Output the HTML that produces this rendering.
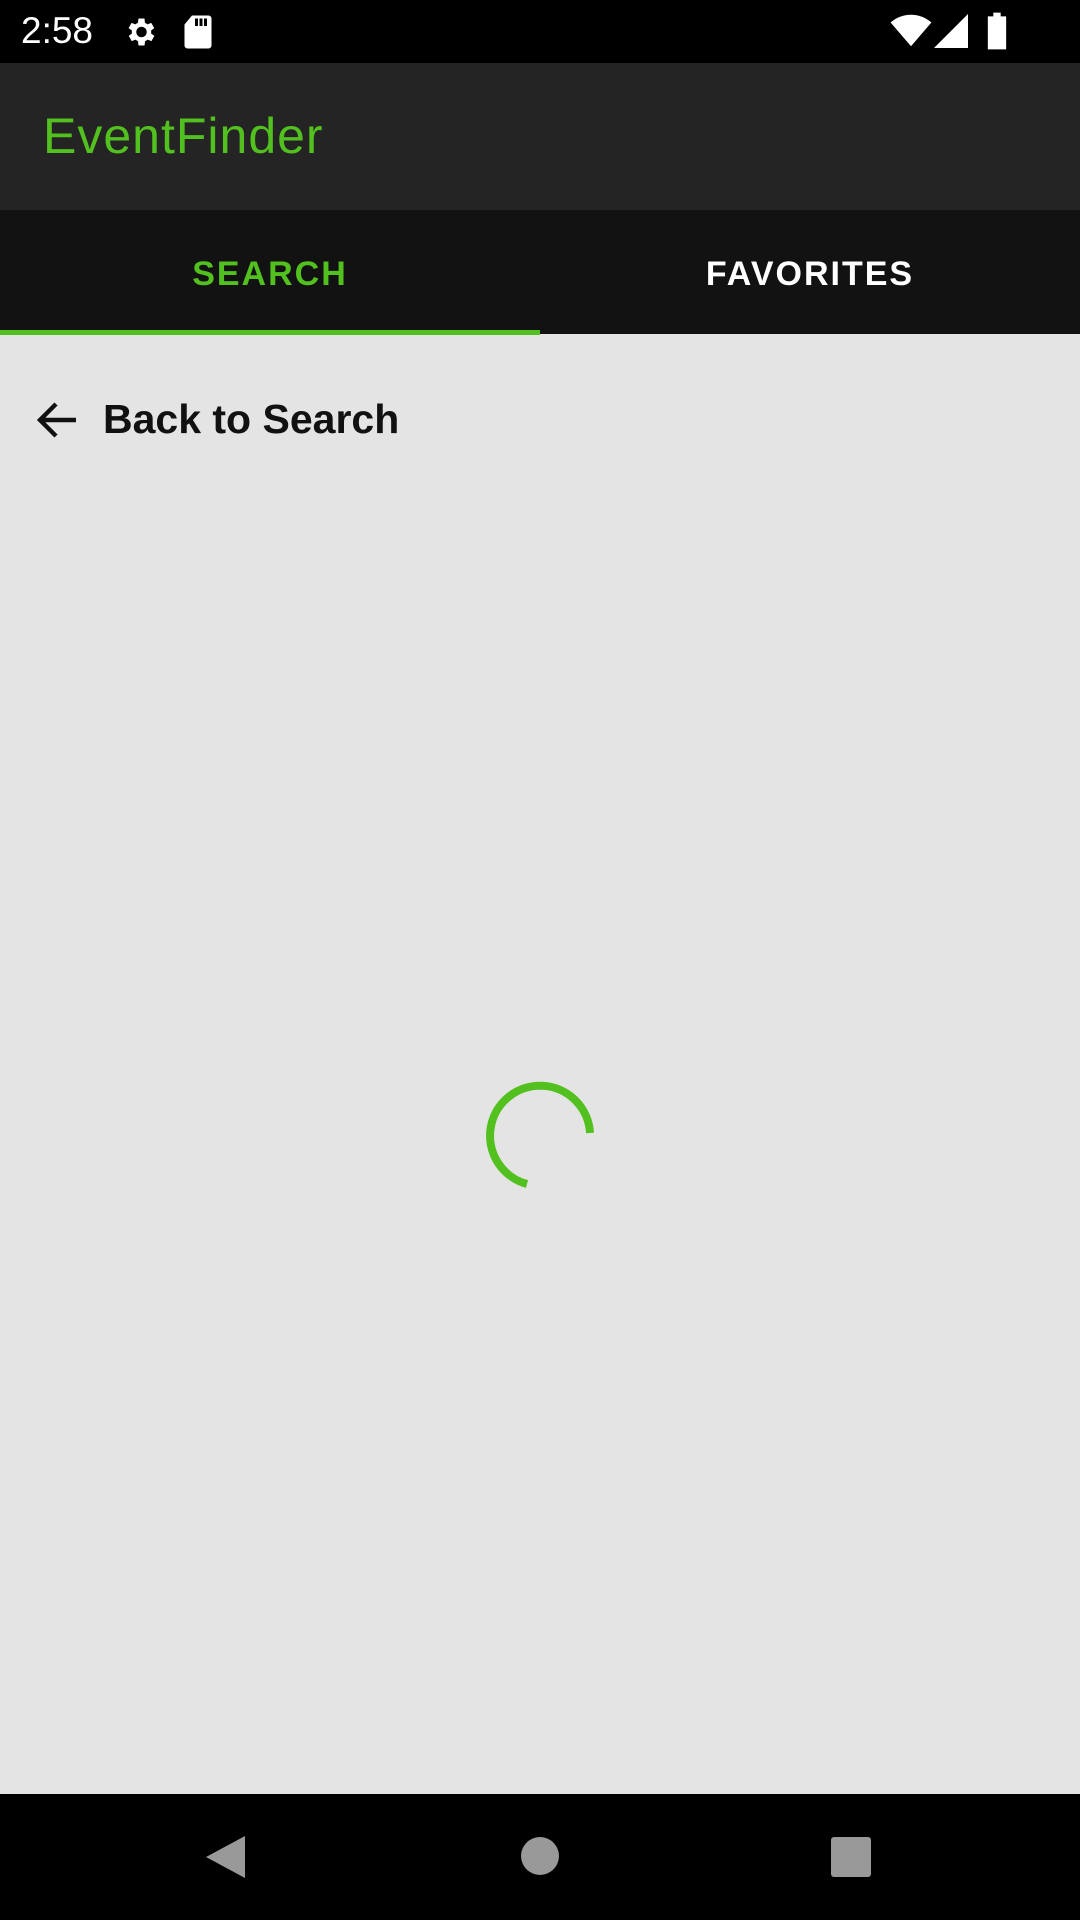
<!DOCTYPE html>
<html><head><meta charset="utf-8"><style>
*{margin:0;padding:0;box-sizing:border-box}
html,body{width:1080px;height:1920px;overflow:hidden}
body{background:#e4e4e4;font-family:"Liberation Sans",Roboto,sans-serif;position:relative}
.sb{position:absolute;top:0;left:0;width:1080px;height:63px;background:#000;color:#fff}
.ab{position:absolute;top:63px;left:0;width:1080px;height:147px;background:#242424}
.ab h1{position:absolute;left:43px;top:44px;font-size:50px;font-weight:normal;color:#52c01e;letter-spacing:1px}
.tabs{position:absolute;top:210px;left:0;width:1080px;height:124px;background:#121212}
.tab{position:absolute;top:0;width:540px;height:124px;line-height:128px;text-align:center;font-size:34px;font-weight:bold;letter-spacing:2px;color:#fff}
.ind{position:absolute;left:0;top:330px;width:540px;height:5px;background:#52c01e}
.back{position:absolute;left:103px;top:396px;font-size:41px;font-weight:bold;color:#111}
.nav{position:absolute;top:1794px;left:0;width:1080px;height:126px;background:#000}
</style></head><body>
<div class="sb">
<div style="position:absolute;left:21px;top:10px;font-size:37px">2:58</div>
<svg style="position:absolute;left:122px;top:14px" width="36" height="36" viewBox="0 0 24 24"><path fill="#fff" d="M19.4 13a7.5 7.5 0 000-2l2.1-1.6-2-3.5-2.5 1a7 7 0 00-1.7-1L15 3h-4l-.4 2.9a7 7 0 00-1.7 1l-2.5-1-2 3.5L6.6 11a7.5 7.5 0 000 2l-2.1 1.6 2 3.5 2.5-1a7 7 0 001.7 1L11 21h4l.4-2.9a7 7 0 001.7-1l2.5 1 2-3.5zM13 15.5a3.5 3.5 0 110-7 3.5 3.5 0 010 7z"/></svg>
<svg style="position:absolute;left:183px;top:14px" width="30" height="36" viewBox="0 0 20 24"><path fill="#fff" d="M6 1h11a2 2 0 012 2v18a2 2 0 01-2 2H3a2 2 0 01-2-2V7zM8 3v5h2V3zM11 3v5h2V3zM14 3v5h2V3z"/></svg>
<svg style="position:absolute;left:890px;top:14px" width="42" height="34" viewBox="0 0 24 20"><path fill="#fff" d="M12 19L0 5a18 18 0 0124 0z"/></svg>
<svg style="position:absolute;left:934px;top:14px" width="34" height="34" viewBox="0 0 20 20"><path fill="#fff" d="M20 0v20H0z"/></svg>
<svg style="position:absolute;left:986px;top:12px" width="22" height="38" viewBox="0 0 12 20"><path fill="#fff" d="M4 0h4v2h3v18H1V2h3z"/></svg>
</div>
<div class="ab"><h1>EventFinder</h1></div>
<div class="tabs"><div class="tab" style="left:0;color:#52c01e">SEARCH</div><div class="tab" style="left:540px">FAVORITES</div></div>
<div class="ind"></div>
<svg style="position:absolute;left:34px;top:396px" width="48" height="48" viewBox="0 0 24 24"><path fill="none" stroke="#111" stroke-width="2.2" d="M21 12H4M11 4l-8 8 8 8"/></svg>
<div class="back">Back to Search</div>
<svg style="position:absolute;left:480px;top:1069px" width="120" height="120" viewBox="0 0 120 120"><path fill="none" stroke="#52c01e" stroke-width="8" d="M47 115A50 50 0 1 1 110 64"/></svg>
<div class="nav">
<svg style="position:absolute;left:204px;top:40px" width="44" height="46" viewBox="0 0 44 46"><path fill="#999" d="M41 2v42L2 23z"/></svg>
<div style="position:absolute;left:521px;top:43px;width:38px;height:38px;border-radius:50%;background:#999"></div>
<div style="position:absolute;left:831px;top:43px;width:40px;height:40px;border-radius:3px;background:#999"></div>
</div>
</body></html>
